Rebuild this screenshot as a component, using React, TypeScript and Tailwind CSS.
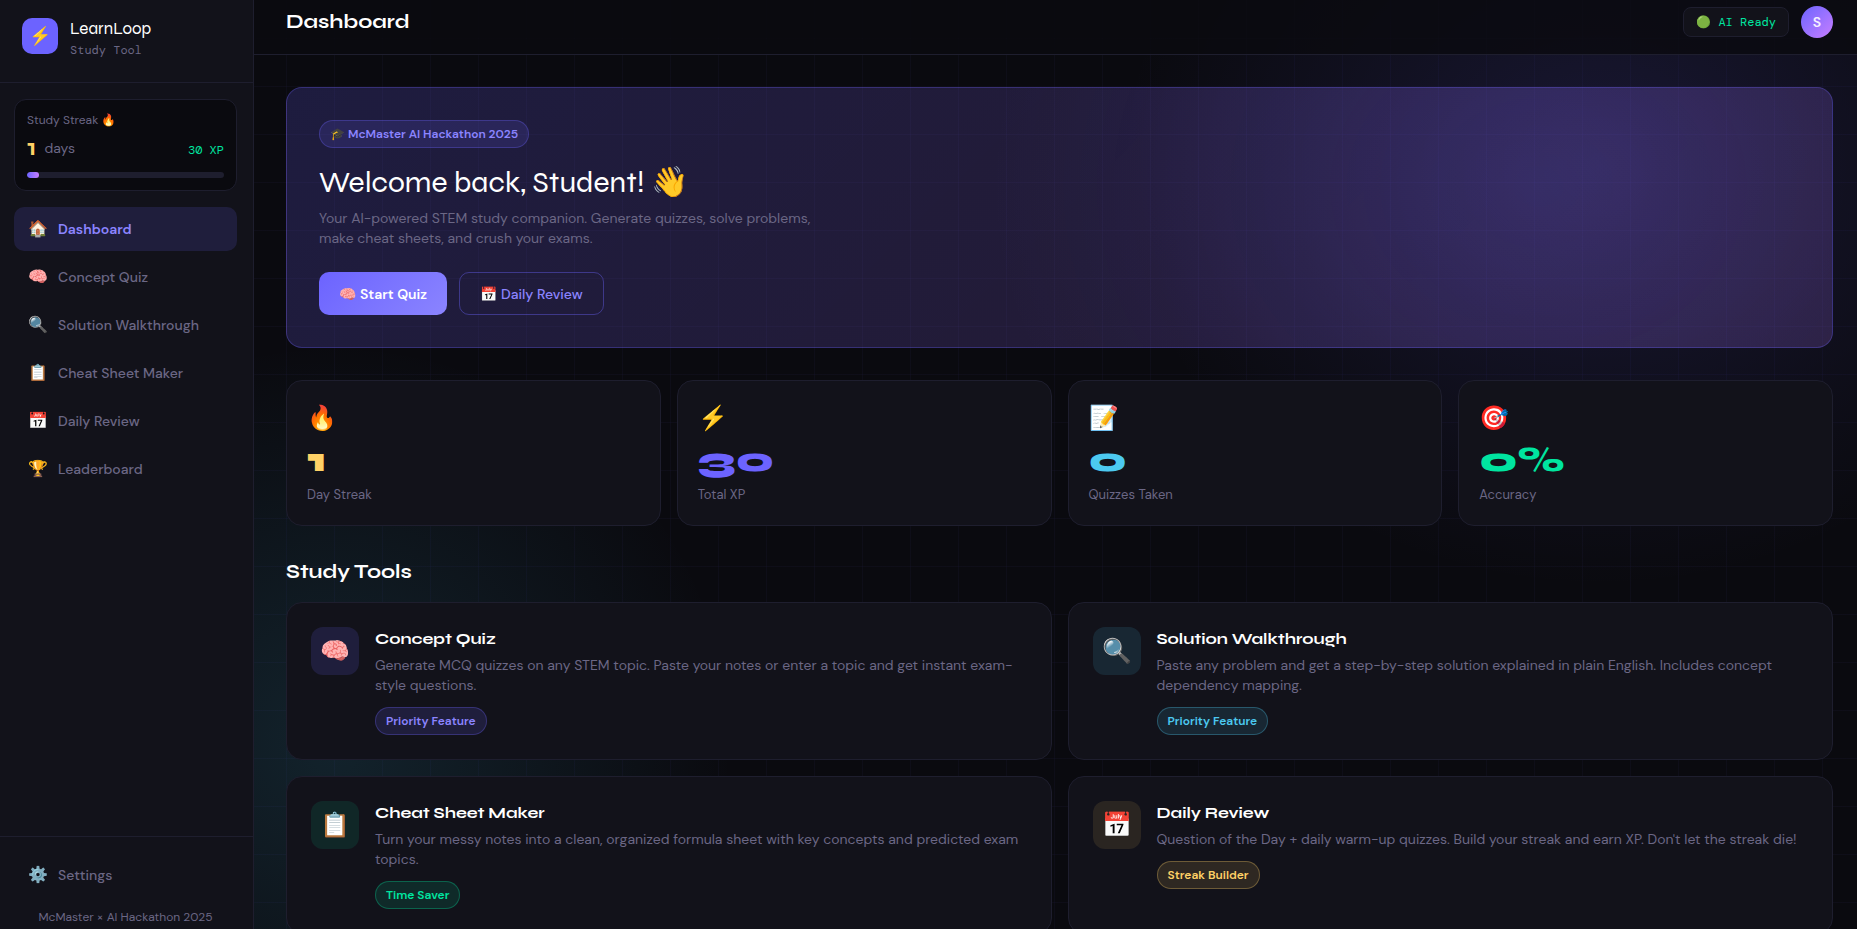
const SYNE = "font-['Syne','DejaVu_Sans',sans-serif]";
const MONO = "font-['DM_Mono','Liberation_Mono',monospace]";

const nav = [
  ["🏠", "Dashboard"],
  ["🧠", "Concept Quiz"],
  ["🔍", "Solution Walkthrough"],
  ["📋", "Cheat Sheet Maker"],
  ["📅", "Daily Review"],
  ["🏆", "Leaderboard"],
];

const stats = [
  { icon: "🔥", value: "1", label: "Day Streak", color: "text-[#ffd166]" },
  { icon: "⚡", value: "30", label: "Total XP", color: "text-[#6c63ff]" },
  { icon: "📝", value: "0", label: "Quizzes Taken", color: "text-[#4cc9f0]" },
  { icon: "🎯", value: "0%", label: "Accuracy", color: "text-[#00e5a0]" },
];

const tools = [
  {
    icon: "🧠",
    title: "Concept Quiz",
    tag: "Priority Feature",
    text: "Generate MCQ quizzes on any STEM topic. Paste your notes or enter a topic and get instant exam-style questions.",
    iconBg: "bg-[#6c63ff]/15",
    tagStyle: "border-[#6c63ff]/30 bg-[#6c63ff]/15 text-[#8b84ff]",
  },
  {
    icon: "🔍",
    title: "Solution Walkthrough",
    tag: "Priority Feature",
    text: "Paste any problem and get a step-by-step solution explained in plain English. Includes concept dependency mapping.",
    iconBg: "bg-[#4cc9f0]/12",
    tagStyle: "border-[#4cc9f0]/30 bg-[#4cc9f0]/12 text-[#4cc9f0]",
  },
  {
    icon: "📋",
    title: "Cheat Sheet Maker",
    tag: "Time Saver",
    text: "Turn your messy notes into a clean, organized formula sheet with key concepts and predicted exam topics.",
    iconBg: "bg-[#00e5a0]/10",
    tagStyle: "border-[#00e5a0]/30 bg-[#00e5a0]/12 text-[#00e5a0]",
  },
  {
    icon: "📅",
    title: "Daily Review",
    tag: "Streak Builder",
    text: "Question of the Day + daily warm-up quizzes. Build your streak and earn XP. Don't let the streak die!",
    iconBg: "bg-[#ffd166]/10",
    tagStyle: "border-[#ffd166]/30 bg-[#ffd166]/12 text-[#ffd166]",
  },
];

export default function App() {
  return (
    <div className="flex h-screen overflow-hidden bg-[#0a0a0f] font-['DM_Sans','Open_Sans',sans-serif] text-[14px] leading-5 text-[#6b6785]">
      <aside className="flex w-[254px] shrink-0 flex-col border-r border-[#1e1e2e] bg-[#12121a]">
        <div className="flex items-start gap-3 border-b border-[#1e1e2e] px-[22px] pt-[18px] pb-[22px]">
          <div className="flex size-9 items-center justify-center rounded-[10px] bg-[#6c63ff] text-[18px]">⚡</div>
          <div>
            <div className={`text-[17px] leading-[22px] text-white ${SYNE}`}>LearnLoop</div>
            <div className={`text-[12px] leading-5 ${MONO}`}>Study Tool</div>
          </div>
        </div>
        <div className="flex grow flex-col gap-4 pt-4 pr-4 pl-[14px]">
          <section className="rounded-xl border border-[#1e1e2e] bg-[#0a0a0f] px-3 py-3">
            <div className="text-[12px] leading-4">Study Streak 🔥</div>
            <div className="mt-2 flex items-end justify-between">
              <div className="flex items-center gap-2">
                <span className={`text-[24px] leading-6 font-bold text-[#ffd166] ${SYNE}`}>1</span>
                <span>days</span>
              </div>
              <span className={`text-[12px] text-[#00e5a0] ${MONO}`}>30 XP</span>
            </div>
            <div className="mt-3 h-1.5 overflow-hidden rounded-full bg-[#1e1e2e]">
              <div className="h-full w-[6%] rounded-full bg-linear-to-r from-[#6c63ff] to-[#c77dff]" />
            </div>
          </section>
          <nav className="flex flex-col gap-1">
            {nav.map(([icon, label], i) => (
              <a
                key={label}
                href="#"
                className={
                  i === 0
                    ? "flex h-11 items-center gap-2.5 rounded-[10px] bg-[#6c63ff]/15 px-3.5 font-semibold text-[#8b84ff]"
                    : "flex h-11 items-center gap-2.5 rounded-[10px] px-3.5 font-medium"
                }
              >
                <span className="w-5 text-center text-[16px]">{icon}</span>
                {label}
              </a>
            ))}
          </nav>
        </div>
        <div className="border-t border-[#1e1e2e] pt-4 pr-4 pl-[14px]">
          <a href="#" className="flex h-11 items-center gap-2.5 px-3.5 font-medium">
            <span className="w-5 text-center text-[16px]">⚙️</span>
            Settings
          </a>
          <div className="pt-2.5 pb-0.5 text-center text-[12px] leading-5">McMaster × AI Hackathon 2025</div>
        </div>
      </aside>

      <div className="min-w-0 grow bg-[radial-gradient(ellipse_480px_420px_at_84%_18%,rgba(108,99,255,0.15),transparent_100%),radial-gradient(circle_400px_at_5%_80%,rgba(76,201,240,0.13),transparent_100%)]">
        <div className="h-full overflow-hidden bg-[linear-gradient(rgba(108,99,255,0.04)_1px,transparent_1px),linear-gradient(90deg,rgba(108,99,255,0.04)_1px,transparent_1px)] bg-[size:48px_48px] bg-[position:32px_38px]">
          <header className="flex items-center justify-between border-b border-[#1e1e2e] bg-[#0a0a0f]/80 pt-1.5 pr-6 pb-4 pl-8">
            <h1 className={`text-[20px] leading-[30px] font-bold text-white ${SYNE}`}>Dashboard</h1>
            <div className="flex items-center gap-3">
              <div className={`rounded-lg border border-[#1e1e2e] bg-[#12121a] px-3 py-1 text-[12px] text-[#00e5a0] ${MONO}`}>🟢 AI Ready</div>
              <div className="flex size-8 items-center justify-center rounded-full bg-linear-to-br from-[#6c63ff] to-[#c77dff] font-semibold text-white/90">S</div>
            </div>
          </header>
          <main className="pt-8 pr-6 pl-8">
            <section className="rounded-[16px] border border-[#6c63ff]/30 bg-[radial-gradient(ellipse_550px_450px_at_81%_38%,rgba(108,99,255,0.13),transparent_100%),linear-gradient(135deg,rgba(108,99,255,0.2),rgba(199,125,255,0.15))] p-8">
              <span className="inline-flex h-7 items-center rounded-full border border-[#6c63ff]/30 bg-[#6c63ff]/15 px-2.5 text-[12px] font-semibold text-[#8b84ff]">🎓 McMaster AI Hackathon 2025</span>
              <h2 className={`mt-4 text-[30px] leading-9 text-white ${SYNE}`}>Welcome back, Student! 👋</h2>
              <p className="mt-2 max-w-[500px]">Your AI-powered STEM study companion. Generate quizzes, solve problems, make cheat sheets, and crush your exams.</p>
              <div className="mt-6 flex gap-3">
                <button className="flex h-[43px] items-center gap-1 rounded-[10px] bg-linear-135 from-[#6c63ff] to-[#8b84ff] px-5 font-semibold text-white">
                  <span>🧠</span>Start Quiz
                </button>
                <button className="flex h-[43px] items-center gap-1 rounded-[10px] border border-[#6c63ff]/40 px-5 font-medium text-[#8b84ff]">
                  <span>📅</span>Daily Review
                </button>
              </div>
            </section>
            <section className="mt-8 grid grid-cols-4 gap-4">
              {stats.map((s) => (
                <div key={s.label} className="rounded-[16px] border border-[#1e1e2e] bg-[#12121a] p-5">
                  <div className="text-[24px] leading-[34px]">{s.icon}</div>
                  <div className={`mt-1.5 text-[36px] leading-[38px] font-extrabold ${s.color} ${SYNE}`}>{s.value}</div>
                  <div className="mt-1.5 text-[13px]">{s.label}</div>
                </div>
              ))}
            </section>
            <h2 className={`mt-8 text-[20px] leading-7 font-bold text-white ${SYNE}`}>Study Tools</h2>
            <section className="mt-4 grid grid-cols-2 gap-4">
              {tools.map((t) => (
                <article key={t.title} className="flex gap-4 rounded-[16px] border border-[#1e1e2e] bg-[#12121a] p-6">
                  <div className={`flex size-12 shrink-0 items-center justify-center rounded-xl text-[24px] ${t.iconBg}`}>{t.icon}</div>
                  <div>
                    <h3 className={`text-[16px] leading-6 font-bold text-white ${SYNE}`}>{t.title}</h3>
                    <p className="mt-1">{t.text}</p>
                    <span className={`mt-3 inline-flex h-7 items-center rounded-full border px-2.5 text-[12px] font-semibold ${t.tagStyle}`}>{t.tag}</span>
                  </div>
                </article>
              ))}
            </section>
          </main>
        </div>
      </div>
    </div>
  );
}
